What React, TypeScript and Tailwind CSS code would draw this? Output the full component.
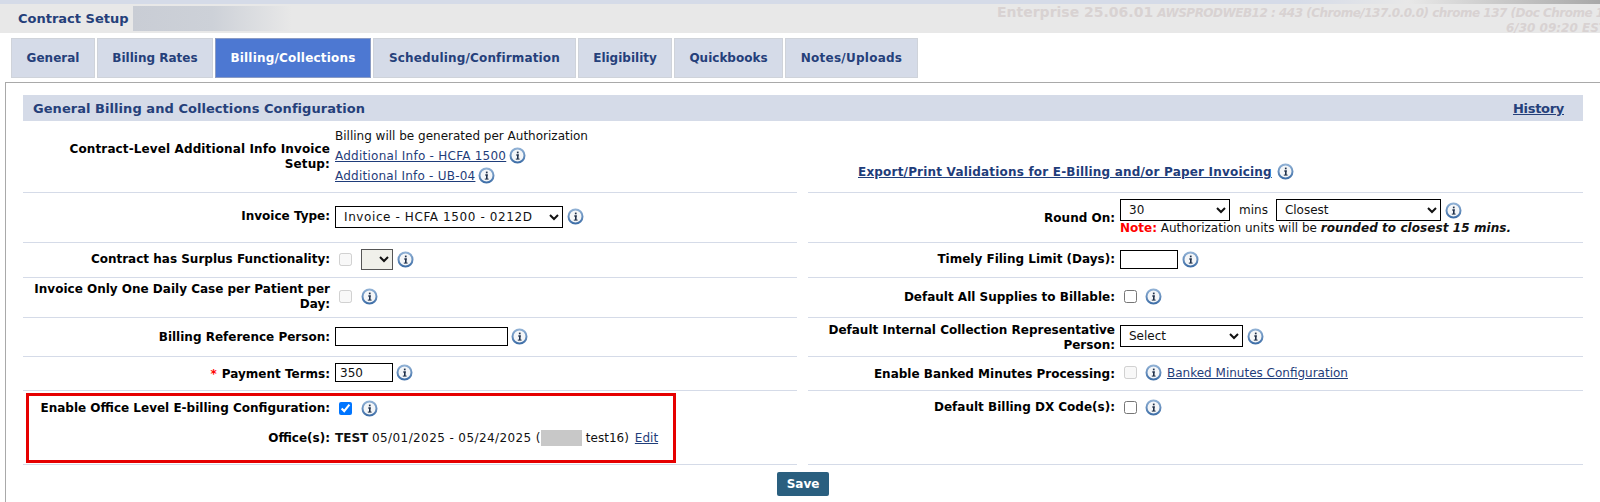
import type { ReactNode } from "react";

const tabs = [
  { name: "General", w: "w-[84px]", extra: "" },
  { name: "Billing Rates", w: "w-[116px]", extra: "" },
  { name: "Billing/Collections", w: "w-[156px]", active: true, extra: "tracking-[0.2px]" },
  { name: "Scheduling/Confirmation", w: "w-[203px]", extra: "tracking-[0.15px]" },
  { name: "Eligibility", w: "w-[94px]", extra: "" },
  { name: "Quickbooks", w: "w-[109px]", extra: "" },
  { name: "Notes/Uploads", w: "w-[133px]", extra: "tracking-[0.25px]" },
];

function Info({ className = "" }: { className?: string }) {
  return (
    <svg width="17" height="17" viewBox="0 0 17 17" className={`shrink-0 ${className}`}>
      <defs>
        <linearGradient id="ring" x1="0" y1="0" x2="0" y2="1">
          <stop offset="0" stopColor="#8fb0d4" />
          <stop offset="1" stopColor="#3f6fa8" />
        </linearGradient>
      </defs>
      <circle cx="8.5" cy="8.5" r="7" fill="#f4f6f8" stroke="url(#ring)" strokeWidth="2" />
      <rect x="7" y="7.5" width="3" height="1" fill="#20304a" />
      <rect x="8" y="7.5" width="1.6" height="4.5" fill="#20304a" />
      <rect x="6.8" y="11.6" width="3.8" height="1" fill="#20304a" />
      <rect x="7.9" y="4.6" width="1.7" height="1.7" fill="#20304a" />
    </svg>
  );
}

function A({ children, className = "" }: { children: ReactNode; className?: string }) {
  return <span className={`text-[#1f3d7a] underline ${className}`}>{children}</span>;
}

function Field({
  label,
  children,
  width = "w-[307px]",
  className = "",
  labelClass = "",
}: {
  label: ReactNode;
  children?: ReactNode;
  width?: string;
  className?: string;
  labelClass?: string;
}) {
  return (
    <div className={`flex items-center ${className}`}>
      <div className={`${width} shrink-0 text-right leading-[15px] font-bold text-black ${labelClass}`}>{label}</div>
      <div className="ml-[5px] flex items-center">{children}</div>
    </div>
  );
}

function Row({ h, left, right }: { h: string; left: ReactNode; right: ReactNode }) {
  return (
    <div className={`flex ${h} gap-[11px]`}>
      <div className="w-[774px] border-b border-[#d5dbe8]">{left}</div>
      <div className="w-[775px] border-b border-[#d5dbe8]">{right}</div>
    </div>
  );
}

const box = "h-[13px] w-[13px]";

export default function App() {
  return (
    <div className="h-[502px] w-[1600px] overflow-hidden bg-white font-['DejaVu_Sans',Verdana,sans-serif] text-[12px] text-[#111]">
      <div className="h-[4px] bg-[linear-gradient(90deg,#d5dbe8_0%,#d5dbe8_81%,#e8e8e8_88%,#a8a8a8_100%)]" />
      <div className="flex h-[29px] justify-between bg-[#e8e8e8]">
        <div className="flex items-center">
          <span className="ml-[18px] text-[13px] font-bold text-[#25407a]">Contract Setup</span>
          <div className="ml-[4px] h-[25px] w-[159px] bg-[linear-gradient(90deg,#c9cdd5_0%,#cdd1d8_50%,#e8e8e8_100%)]" />
        </div>
        <div className="w-[603px] overflow-hidden pt-[1px] leading-[15px] font-bold whitespace-nowrap text-[#d8d2d2]">
          <div>
            <span className="text-[14px]">Enterprise 25.06.01</span>{" "}
            <span className="tracking-[-0.5px] italic">
              AWSPRODWEB12 : 443 (Chrome/137.0.0.0) chrome 137 (Doc Chrome 137)
            </span>
          </div>
          <div className="-mr-[7px] text-right italic">6/30 09:20 EST</div>
        </div>
      </div>

      <div className="mt-[5px] ml-[11px] flex h-[40px] gap-[2px]">
        {tabs.map((t) => (
          <div
            key={t.name}
            className={`flex ${t.w} items-center justify-center border font-bold ${t.extra} ${
              t.active
                ? "border-[#8a9bc4] bg-[#4d78d2] text-white"
                : "border-[#cfd3da] bg-[#d5dbe8] text-[#25407a]"
            }`}
          >
            {t.name}
          </div>
        ))}
      </div>

      <div className="mt-[4px] ml-[5px] h-[500px] border-t border-l border-[#a9a9a9] pt-[12px] pl-[17px]">
        <div className="flex h-[26px] w-[1560px] items-center justify-between bg-[#d5dbe8] pt-[1px] pr-[19px] pl-[10px] text-[13px] font-bold text-[#25407a]">
          <span className="tracking-[0.05px]">General Billing and Collections Configuration</span>
          <span className="tracking-[-0.3px] underline">History</span>
        </div>

        <Row
          h="h-[72px]"
          left={
            <div className="flex h-full items-center">
              <div className="w-[307px] shrink-0 text-right leading-[15px] font-bold tracking-[0.12px] text-black">
                Contract-Level Additional Info Invoice
                <br />
                Setup:
              </div>
              <div className="ml-[5px] pb-[2px] leading-[20px]">
                <div>Billing will be generated per Authorization</div>
                <div className="flex items-center gap-[3px]">
                  <A className="tracking-[0.25px]">Additional Info - HCFA 1500</A>
                  <Info />
                </div>
                <div className="flex items-center gap-[3px]">
                  <A className="tracking-[0.22px]">Additional Info - UB-04</A>
                  <Info />
                </div>
              </div>
            </div>
          }
          right={
            <div className="flex h-full items-center pt-[30px] pl-[50px] font-bold">
              <A className="tracking-[0.19px]">Export/Print Validations for E-Billing and/or Paper Invoicing</A>
              <Info className="ml-[5px]" />
            </div>
          }
        />

        <Row
          h="h-[50px]"
          left={
            <Field label="Invoice Type:" className="h-full pb-[2px]">
              <select className="h-[22px] w-[228px] border border-black pl-[4px] tracking-[0.6px]">
                <option>Invoice - HCFA 1500 - 0212D</option>
              </select>
              <Info className="ml-[4px]" />
            </Field>
          }
          right={
            <div className="flex h-full">
              <div className="w-[307px] shrink-0 pt-[18px] text-right leading-[15px] font-bold text-black">Round On:</div>
              <div className="ml-[5px] pt-[6px]">
                <div className="flex items-center">
                  <select className="h-[22px] w-[110px] border border-black pl-[4px]">
                    <option>30</option>
                  </select>
                  <span className="ml-[9px]">mins</span>
                  <select className="ml-[8px] h-[22px] w-[165px] border border-black pl-[4px]">
                    <option>Closest</option>
                  </select>
                  <Info className="ml-[4px]" />
                </div>
                <div className="leading-[15px] whitespace-nowrap">
                  <span className="font-bold text-[#f00]">Note:</span> Authorization units will be{" "}
                  <span className="font-bold tracking-[0.07px] italic">rounded to closest 15 mins.</span>
                </div>
              </div>
            </div>
          }
        />

        <Row
          h="h-[35px]"
          left={
            <Field label="Contract has Surplus Functionality:" className="h-full pb-[2px]">
              <input type="checkbox" disabled className={`${box} ml-[4px]`} />
              <select disabled className="ml-[9px] h-[21px] w-[32px] border border-[#555] bg-[#f0f0ea]" />
              <Info className="ml-[4px]" />
            </Field>
          }
          right={
            <Field label="Timely Filing Limit (Days):" className="h-full pb-[2px]">
              <input className="h-[19px] w-[58px] border border-black" />
              <Info className="ml-[4px]" />
            </Field>
          }
        />

        <Row
          h="h-[40px]"
          left={
            <Field label="Invoice Only One Daily Case per Patient per Day:" className="h-full pb-[2px]">
              <input type="checkbox" disabled className={`${box} ml-[4px]`} />
              <Info className="ml-[9px]" />
            </Field>
          }
          right={
            <Field label="Default All Supplies to Billable:" className="h-full pb-[2px]" labelClass="pt-[2px]">
              <input type="checkbox" className={`${box} ml-[4px]`} />
              <Info className="ml-[8px]" />
            </Field>
          }
        />

        <Row
          h="h-[39px]"
          left={
            <Field label="Billing Reference Person:" className="h-full pb-[2px]" labelClass="pt-[2px]">
              <input className="h-[19px] w-[173px] border border-black" />
              <Info className="ml-[3px]" />
            </Field>
          }
          right={
            <Field
              label="Default Internal Collection Representative Person:"
              className="h-full pb-[2px]"
              labelClass="pt-[4px]"
            >
              <select className="h-[22px] w-[123px] border border-black pl-[4px]">
                <option>Select</option>
              </select>
              <Info className="ml-[4px]" />
            </Field>
          }
        />

        <Row
          h="h-[34px]"
          left={
            <Field
              label={
                <>
                  <span className="mr-[5px] text-[#f00]">*</span>Payment Terms:
                </>
              }
              className="h-full pb-[2px]"
              labelClass="pt-[4px]"
            >
              <input defaultValue="350" className="h-[19px] w-[58px] border border-black pl-[4px]" />
              <Info className="ml-[3px]" />
            </Field>
          }
          right={
            <Field label="Enable Banked Minutes Processing:" className="h-full pb-[2px]" labelClass="pt-[4px]">
              <input type="checkbox" disabled className={`${box} ml-[4px]`} />
              <Info className="ml-[8px]" />
              <span className="ml-[5px]">
                <A>Banked Minutes Configuration</A>
              </span>
            </Field>
          }
        />

        <Row
          h="h-[74px]"
          left={
            <div className="mt-[2px] ml-[3px] h-[70px] w-[650px] border-[3px] border-[#e60000] pt-[4px]">
              <Field label="Enable Office Level E-billing Configuration:" width="w-[301px]">
                <input type="checkbox" defaultChecked className={`${box} ml-[4px] accent-[#0075ff]`} />
                <Info className="ml-[9px]" />
              </Field>
              <Field label="Office(s):" width="w-[301px]" className="mt-[12px]">
                <span className="whitespace-nowrap">
                  <b>TEST</b> <span className="tracking-[0.4px]">05/01/2025 - 05/24/2025 (</span>
                </span>
                <div className="h-[16px] w-[41px] bg-[#c8c8c8]" />
                <span className="ml-[4px] whitespace-nowrap">test16)</span>
                <span className="ml-[6px]">
                  <A>Edit</A>
                </span>
              </Field>
            </div>
          }
          right={
            <Field label="Default Billing DX Code(s):" className="items-start pt-[8px]" labelClass="pt-[1px]">
              <input type="checkbox" className={`${box} ml-[4px]`} />
              <Info className="ml-[8px]" />
            </Field>
          }
        />

        <div className="mt-[7px] ml-[754px] flex h-[24px] w-[52px] items-center justify-center rounded-[2px] bg-[#2a5f7f] font-bold text-white">
          Save
        </div>
      </div>
    </div>
  );
}
